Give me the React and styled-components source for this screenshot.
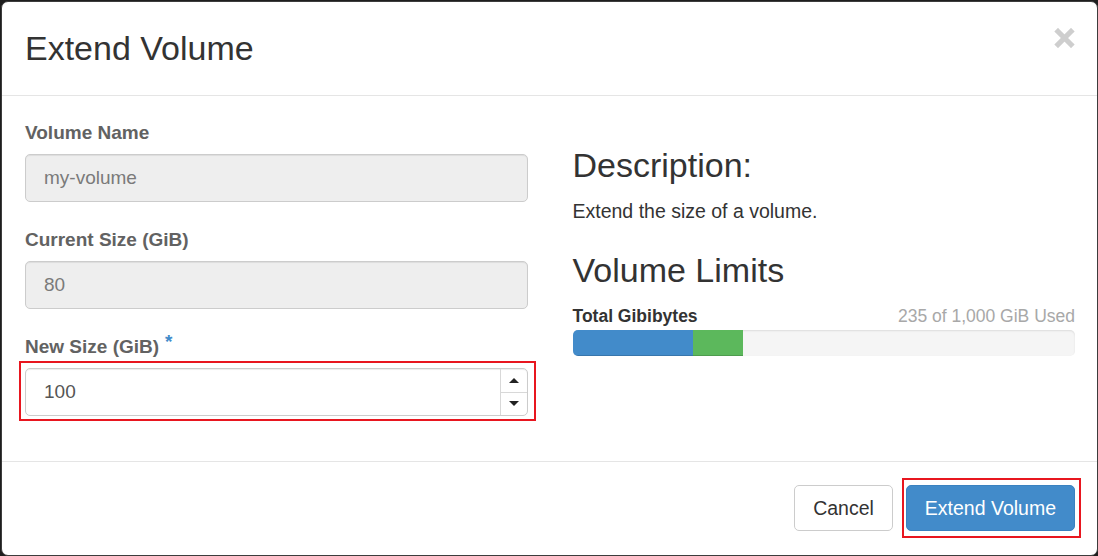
import React from 'react';
import styled, { createGlobalStyle } from 'styled-components';

const GlobalStyle = createGlobalStyle`
  html, body {
    margin: 0;
    padding: 0;
    background: #1e1e1e;
    overflow: hidden;
  }
  body {
    font-family: "Liberation Sans", Arial, sans-serif;
    color: #333;
  }
  * { box-sizing: border-box; }
`;

const Page = styled.div`
  padding: 1px 0 0 1px;
  width: 1098px;
  height: 556px;
`;

const Modal = styled.div`
  width: 1097px;
  height: 555px;
  background: #fff;
  border: 1px solid #3c3c3c;
  border-radius: 7px;
  display: flex;
  flex-direction: column;
  overflow: hidden;
`;

const Header = styled.div`
  display: flex;
  justify-content: space-between;
  align-items: flex-start;
  padding: 28px 22px 28px 23px;
  border-bottom: 1px solid #e5e5e5;
`;

const Title = styled.h4`
  margin: 0;
  font-size: 34px;
  line-height: 37px;
  font-weight: normal;
  color: #333;
`;

const Close = styled.button`
  border: 0;
  background: none;
  padding: 0;
  margin-top: -2px;
  width: 21px;
  height: 20px;
  cursor: pointer;
  display: block;
`;

const Body = styled.div`
  display: grid;
  grid-template-columns: 1fr 1fr;
  column-gap: 45px;
  padding: 23px 22px 45px 23px;
  border-bottom: 1px solid #e5e5e5;
`;

const Column = styled.div`
  display: flex;
  flex-direction: column;
  padding-top: ${p => p.offset || 0}px;
`;

const FormGroup = styled.div`
  display: flex;
  flex-direction: column;
  margin-bottom: ${p => (p.last ? 0 : 24)}px;
`;

const Label = styled.label`
  font-size: 19px;
  line-height: 27px;
  font-weight: bold;
  color: #626262;
  margin-bottom: 8px;
`;

const Required = styled.span`
  color: #428bca;
  font-size: 19px;
  margin-left: 6px;
  position: relative;
  top: -5px;
`;

const TextInput = styled.input`
  height: 48px;
  width: 100%;
  border: 1px solid #ccc;
  border-radius: 5px;
  padding: 0 18px;
  font-family: inherit;
  font-size: 19px;
  color: #7a7a7a;
  background: ${p => (p.disabled ? '#eee' : '#fff')};
  box-shadow: inset 0 1px 1px rgba(0, 0, 0, 0.075);
  outline: none;
`;

const Highlight = styled.div`
  border: 2px solid #e8161f;
  padding: ${p => p.pad};
  margin: ${p => p.mar};
`;

const NumberBox = styled.div`
  display: flex;
  height: 48px;
  border: 1px solid #ccc;
  border-radius: 5px;
  background: #fff;
  box-shadow: inset 0 1px 1px rgba(0, 0, 0, 0.075);
  overflow: hidden;
`;

const NumberField = styled.input`
  flex: 1;
  border: 0;
  background: transparent;
  padding: 0 18px;
  font-family: inherit;
  font-size: 19px;
  color: #555;
  outline: none;
  min-width: 0;
`;

const Spinner = styled.div`
  width: 27px;
  display: flex;
  flex-direction: column;
  border-left: 1px solid #d8d8d8;
`;

const SpinButton = styled.div`
  flex: 1;
  display: flex;
  align-items: center;
  justify-content: center;
  border-top: ${p => (p.down ? '1px solid #d8d8d8' : '0')};
`;

const Triangle = styled.span`
  width: 0;
  height: 0;
  border-left: 5px solid transparent;
  border-right: 5px solid transparent;
  ${p => (p.down ? 'border-top: 5px solid #222;' : 'border-bottom: 5px solid #222;')}
`;

const Heading = styled.h3`
  margin: 0;
  font-size: 34px;
  line-height: 37px;
  font-weight: normal;
  color: #333;
`;

const Description = styled.p`
  margin: 14px 0 27px;
  font-size: 19.5px;
  line-height: 27px;
  color: #333;
`;

const QuotaHeader = styled.div`
  display: flex;
  justify-content: space-between;
  align-items: baseline;
  margin-top: 15px;
  line-height: 25px;
  font-size: 17.5px;
`;

const QuotaName = styled.strong`
  color: #333;
  font-weight: bold;
`;

const QuotaUsed = styled.span`
  color: #a8a8a8;
`;

const Progress = styled.div`
  display: flex;
  height: 26px;
  margin-top: 1px;
  border-radius: 5px;
  background: #f5f5f5;
  box-shadow: inset 0 1px 2px rgba(0, 0, 0, 0.1);
  overflow: hidden;
`;

const Bar = styled.div`
  height: 100%;
  background: ${p => p.color};
  box-shadow: inset 0 -1px 0 rgba(0, 0, 0, 0.15);
`;

const Footer = styled.div`
  display: flex;
  justify-content: flex-end;
  align-items: center;
  gap: 13px;
  padding: 23px 22px 23px 23px;
`;

const Button = styled.button`
  height: 46px;
  padding: 0 18px;
  border-radius: 5px;
  font-family: inherit;
  font-size: 19.5px;
  cursor: pointer;
  border: 1px solid ${p => (p.primary ? '#3a81c0' : '#ccc')};
  background: ${p => (p.primary ? '#428bca' : '#fff')};
  color: ${p => (p.primary ? '#fff' : '#333')};
`;

const CloseIcon = () => (
  <svg width="21" height="20" viewBox="0 0 21 20">
    <path d="M4 3.5 L17 16.5 M17 3.5 L4 16.5" stroke="#cecece" strokeWidth="5.2" strokeLinecap="square" fill="none" />
  </svg>
);

export default function App() {
  const blue = (120 / 502) * 100;
  const green = (50 / 502) * 100;

  return (
    <Page>
      <GlobalStyle />
      <Modal>
        <Header>
          <Title>Extend Volume</Title>
          <Close aria-label="Close"><CloseIcon /></Close>
        </Header>
        <Body>
          <Column>
            <FormGroup>
              <Label>Volume Name</Label>
              <TextInput disabled defaultValue="my-volume" />
            </FormGroup>
            <FormGroup>
              <Label>Current Size (GiB)</Label>
              <TextInput disabled defaultValue="80" />
            </FormGroup>
            <FormGroup last>
              <Label>New Size (GiB)<Required>*</Required></Label>
              <Highlight pad="5px 6px 3px 4px" mar="-7px -8px -5px -6px">
                <NumberBox>
                  <NumberField defaultValue="100" />
                  <Spinner>
                    <SpinButton><Triangle /></SpinButton>
                    <SpinButton down><Triangle down /></SpinButton>
                  </Spinner>
                </NumberBox>
              </Highlight>
            </FormGroup>
          </Column>
          <Column offset={28}>
            <Heading>Description:</Heading>
            <Description>Extend the size of a volume.</Description>
            <Heading>Volume Limits</Heading>
            <QuotaHeader>
              <QuotaName>Total Gibibytes</QuotaName>
              <QuotaUsed>235 of 1,000 GiB Used</QuotaUsed>
            </QuotaHeader>
            <Progress>
              <Bar color="#428bca" style={{ width: `${blue}%` }} />
              <Bar color="#5cb85c" style={{ width: `${green}%` }} />
            </Progress>
          </Column>
        </Body>
        <Footer>
          <Button>Cancel</Button>
          <Highlight pad="5px 4px 5px 2px" mar="-7px -6px -7px -4px">
            <Button primary>Extend Volume</Button>
          </Highlight>
        </Footer>
      </Modal>
    </Page>
  );
}
